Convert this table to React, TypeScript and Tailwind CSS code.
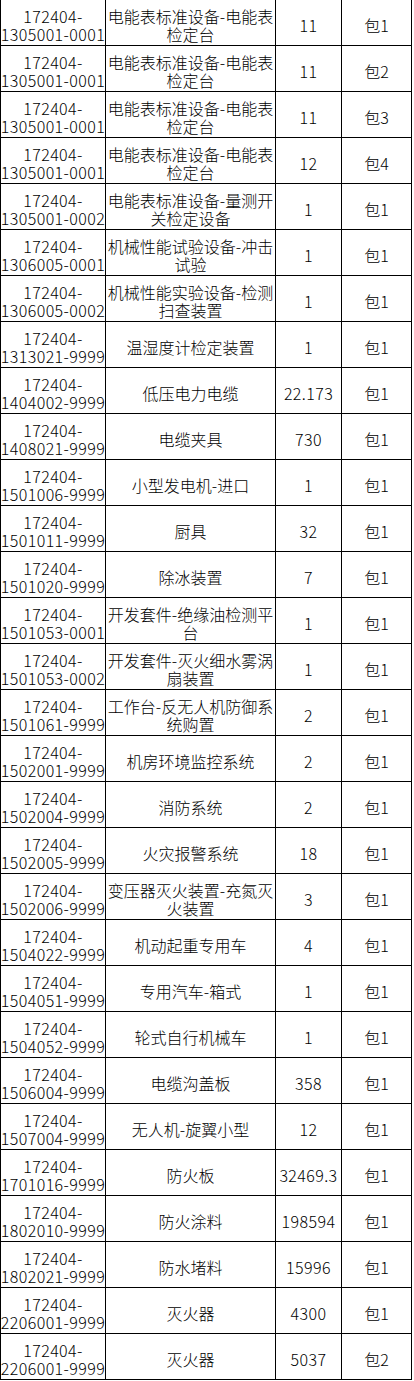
type Row = {
  code: string;
  name: string[];
  qty: string;
  pkg: string;
};

const rows: Row[] = [
  { code: "1305001-0001", name: ["电能表标准设备-电能表", "检定台"], qty: "11", pkg: "包1" },
  { code: "1305001-0001", name: ["电能表标准设备-电能表", "检定台"], qty: "11", pkg: "包2" },
  { code: "1305001-0001", name: ["电能表标准设备-电能表", "检定台"], qty: "11", pkg: "包3" },
  { code: "1305001-0001", name: ["电能表标准设备-电能表", "检定台"], qty: "12", pkg: "包4" },
  { code: "1305001-0002", name: ["电能表标准设备-量测开", "关检定设备"], qty: "1", pkg: "包1" },
  { code: "1306005-0001", name: ["机械性能试验设备-冲击", "试验"], qty: "1", pkg: "包1" },
  { code: "1306005-0002", name: ["机械性能实验设备-检测", "扫查装置"], qty: "1", pkg: "包1" },
  { code: "1313021-9999", name: ["温湿度计检定装置"], qty: "1", pkg: "包1" },
  { code: "1404002-9999", name: ["低压电力电缆"], qty: "22.173", pkg: "包1" },
  { code: "1408021-9999", name: ["电缆夹具"], qty: "730", pkg: "包1" },
  { code: "1501006-9999", name: ["小型发电机-进口"], qty: "1", pkg: "包1" },
  { code: "1501011-9999", name: ["厨具"], qty: "32", pkg: "包1" },
  { code: "1501020-9999", name: ["除冰装置"], qty: "7", pkg: "包1" },
  { code: "1501053-0001", name: ["开发套件-绝缘油检测平", "台"], qty: "1", pkg: "包1" },
  { code: "1501053-0002", name: ["开发套件-灭火细水雾涡", "扇装置"], qty: "1", pkg: "包1" },
  { code: "1501061-9999", name: ["工作台-反无人机防御系", "统购置"], qty: "2", pkg: "包1" },
  { code: "1502001-9999", name: ["机房环境监控系统"], qty: "2", pkg: "包1" },
  { code: "1502004-9999", name: ["消防系统"], qty: "2", pkg: "包1" },
  { code: "1502005-9999", name: ["火灾报警系统"], qty: "18", pkg: "包1" },
  { code: "1502006-9999", name: ["变压器灭火装置-充氮灭", "火装置"], qty: "3", pkg: "包1" },
  { code: "1504022-9999", name: ["机动起重专用车"], qty: "4", pkg: "包1" },
  { code: "1504051-9999", name: ["专用汽车-箱式"], qty: "1", pkg: "包1" },
  { code: "1504052-9999", name: ["轮式自行机械车"], qty: "1", pkg: "包1" },
  { code: "1506004-9999", name: ["电缆沟盖板"], qty: "358", pkg: "包1" },
  { code: "1507004-9999", name: ["无人机-旋翼小型"], qty: "12", pkg: "包1" },
  { code: "1701016-9999", name: ["防火板"], qty: "32469.3", pkg: "包1" },
  { code: "1802010-9999", name: ["防火涂料"], qty: "198594", pkg: "包1" },
  { code: "1802021-9999", name: ["防水堵料"], qty: "15996", pkg: "包1" },
  { code: "2206001-9999", name: ["灭火器"], qty: "4300", pkg: "包1" },
  { code: "2206001-9999", name: ["灭火器"], qty: "5037", pkg: "包2" },
];

function Cell({
  className,
  children,
}: {
  className: string;
  children: React.ReactNode;
}) {
  return (
    <div
      className={`flex flex-col items-center justify-center whitespace-nowrap border-r border-black pt-[5px] text-center ${className}`}
    >
      {children}
    </div>
  );
}

export default function App() {
  return (
    <div className="min-h-screen bg-white font-['Noto_Sans_CJK_SC',sans-serif] text-[16px] font-light leading-[18px] text-black">
      <div className="w-[412px]">
        {rows.map((row, i) => (
          <div key={i} className="flex h-[46px] border-b border-black">
            <Cell className="w-[106px] border-l tracking-[0.4px]">
              <span>172404-</span>
              <span>{row.code}</span>
            </Cell>
            <Cell className="w-[170px]">
              {row.name.map((line) => (
                <span key={line}>{line}</span>
              ))}
            </Cell>
            <Cell className="w-[66px] tracking-[0.4px]">{row.qty}</Cell>
            <Cell className="w-[70px]">{row.pkg}</Cell>
          </div>
        ))}
      </div>
    </div>
  );
}
